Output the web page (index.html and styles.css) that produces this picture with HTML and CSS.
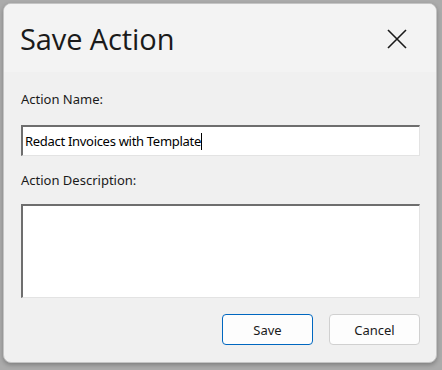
FILE: index.html
```html
<!DOCTYPE html>
<html>
<head>
    <title>Save Action</title>
    <link rel="stylesheet" href="styles.css">
</head>
<body>
    <!-- Dimmed app behind the dialog -->
    <div class="backdrop">
        <div class="dialog">
            <div class="title-bar">
                <h1>Save Action</h1>
                <button class="close-btn" aria-label="Close">
                    <svg width="20" height="20" viewBox="0 0 20 20">
                        <path d="M1 1 L19 19 M19 1 L1 19" stroke="#1a1a1a" stroke-width="1.6" fill="none"/>
                    </svg>
                </button>
            </div>
            <div class="dialog-body">
                <label class="field-label" for="action-name">Action Name:</label>
                <div class="text-input">
                    <span id="action-name">Redact Invoices with Template</span><span class="caret"></span>
                </div>
                <label class="field-label" for="action-desc">Action Description:</label>
                <div class="text-area" id="action-desc"></div>
                <div class="button-row">
                    <button class="btn btn-default">Save</button>
                    <button class="btn">Cancel</button>
                </div>
            </div>
        </div>
    </div>
</body>
</html>
```

FILE: styles.css
```css
* {
    margin: 0;
    padding: 0;
    box-sizing: border-box;
}

body {
    background: #ababab;
    width: 442px;
    height: 370px;
    overflow: hidden;
    font-family: 'Noto Sans', 'Open Sans', sans-serif;
}

.backdrop {
    padding: 3px 0 0 3px;
}

.dialog {
    width: 434px;
    height: 360px;
    border-radius: 8px;
    background: #f0f0f0;
    border: 1px solid #c4c4c4;
    overflow: hidden;
    box-shadow: 0 2px 4px rgba(0, 0, 0, 0.25);
}

/* Title bar */
.title-bar {
    height: 68px;
    background: #f3f3f3;
    display: flex;
    justify-content: space-between;
    align-items: center;
    padding: 0 29px 0 16px;
}

.title-bar h1 {
    font-family: 'Open Sans', 'Noto Sans', sans-serif;
    font-size: 29px;
    font-weight: 400;
    color: #1a1a1a;
    letter-spacing: -0.1px;
    margin-top: 1px;
}

.close-btn {
    background: none;
    border: none;
    width: 20px;
    height: 20px;
    display: flex;
    margin-top: 2px;
}

/* Form body */
.dialog-body {
    padding: 18px 16px 0 17px;
    display: flex;
    flex-direction: column;
}

.field-label {
    font-size: 13px;
    color: #1a1a1a;
    line-height: 18px;
}

.text-input {
    margin-top: 17px;
    margin-bottom: 15px;
    height: 31px;
    background: #fff;
    border-top: 2px solid #6e6e6e;
    border-left: 2px solid #6e6e6e;
    border-right: 1px solid #e3e3e3;
    border-bottom: 1px solid #e3e3e3;
    display: flex;
    align-items: center;
    padding-left: 2px;
    font-size: 13px;
    color: #000;
    letter-spacing: -0.3px;
}

.caret {
    width: 1px;
    height: 17px;
    background: #000;
}

.text-area {
    margin-top: 15px;
    height: 94px;
    background: #fff;
    border-top: 2px solid #6e6e6e;
    border-left: 2px solid #6e6e6e;
    border-right: 1px solid #e3e3e3;
    border-bottom: 1px solid #e3e3e3;
}

.button-row {
    display: flex;
    justify-content: flex-end;
    gap: 16px;
    margin-top: 16px;
}

.btn {
    width: 91px;
    height: 31px;
    background: #fdfdfd;
    border: 1px solid #d0d0d0;
    border-radius: 4px;
    font-family: 'Noto Sans', 'Open Sans', sans-serif;
    font-size: 13px;
    color: #1a1a1a;
}

.btn-default {
    border-color: #0067c0;
}
```
